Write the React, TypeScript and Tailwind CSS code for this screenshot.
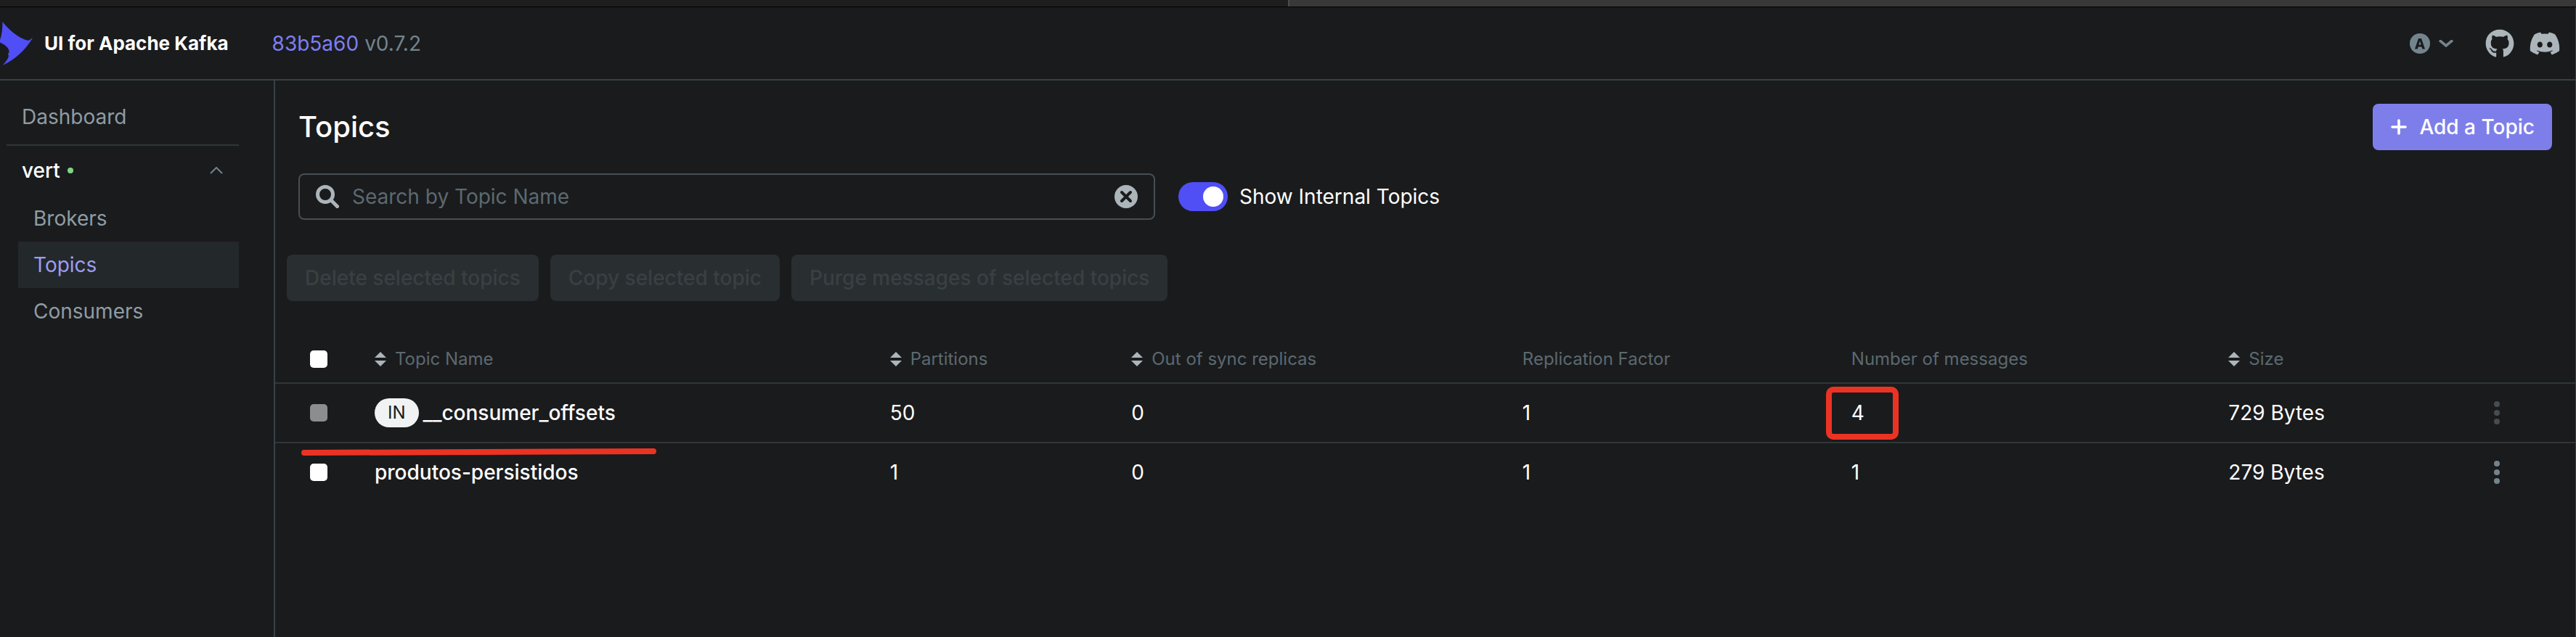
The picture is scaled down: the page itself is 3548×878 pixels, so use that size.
import React from "react";
import { FaGithub, FaDiscord } from "react-icons/fa";

type Topic = {
  name: string;
  internal: boolean;
  partitions: number;
  outOfSync: number;
  replication: number;
  messages: number;
  size: string;
};

const topics: Topic[] = [
  { name: "__consumer_offsets", internal: true, partitions: 50, outOfSync: 0, replication: 1, messages: 4, size: "729 Bytes" },
  { name: "produtos-persistidos", internal: false, partitions: 1, outOfSync: 0, replication: 1, messages: 1, size: "279 Bytes" },
];

const columns = [
  { label: "Topic Name", sortable: true },
  { label: "Partitions", sortable: true },
  { label: "Out of sync replicas", sortable: true },
  { label: "Replication Factor", sortable: false },
  { label: "Number of messages", sortable: false },
  { label: "Size", sortable: true },
];

function Logo() {
  return (
    <svg className="h-[60px] w-[45px] shrink-0" viewBox="0 0 45 60" aria-hidden="true">
      <path
        fill="#4f4ff5"
        d="M3.5 0C13 12 25 22 38.5 26C41 25 43 23.500 45 22C36 38 21 52 3.500 60C8 55 11.500 51 12 46.500C10.500 44 11.500 43 12.500 42.500C13 38 10 33 0 28.500V25C2.500 18 3.500 9 3.500 0Z"
      />
    </svg>
  );
}

function SortIcon() {
  return (
    <svg className="h-5 w-4 shrink-0" viewBox="0 0 16 20" fill="#abb5ba" aria-hidden="true">
      <path d="M8 0L16 8H0Z" />
      <path d="M8 20L0 12H16Z" />
    </svg>
  );
}

function Header() {
  return (
    <header className="flex h-[101px] items-center justify-between border-b-2 border-[#394246] pr-5">
      <div className="flex items-center">
        <a href="#" className="flex items-center gap-4 text-[26px] font-bold text-white">
          <Logo />
          UI for Apache Kafka
        </a>
        <div className="ml-[60px] flex gap-2 text-[#73848c]">
          <a href="#" className="text-[#7e7ef1]">83b5a60</a>
          <span>v0.7.2</span>
        </div>
      </div>
      <div className="flex items-center gap-5">
        <button type="button" aria-label="Theme" className="mr-6 flex items-center gap-3">
          <svg className="size-7" viewBox="0 0 28 28" aria-hidden="true">
            <circle cx="14" cy="14" r="14" fill="#73848c" />
            <path fill="#1a1b1d" fillRule="evenodd" d="M7 21.500L12 7H16L21 21.500H17.300L16.400 18.500H11.600L10.700 21.500ZM12.400 15.700H15.600L14 10.500Z" />
          </svg>
          <svg className="h-[10px] w-5" viewBox="0 0 20 10" fill="none" stroke="#73848c" strokeWidth="3.6" aria-hidden="true">
            <path d="M1 0.500L10 8L19 0.500" />
          </svg>
        </button>
        <a href="#" aria-label="GitHub">
          <FaGithub className="size-10 text-[#abb5ba]" />
        </a>
        <a href="#" aria-label="Discord">
          <FaDiscord className="size-11 text-[#abb5ba]" />
        </a>
      </div>
    </header>
  );
}

function Sidebar() {
  return (
    <aside className="w-[379px] shrink-0 border-r-2 border-[#394246] pt-[18px] pr-12 pl-[9px] text-[#8f9ca3]">
      <nav>
        <a href="#" className="flex h-16 items-center pl-[21px]">Dashboard</a>
        <hr className="mt-[6px] border-t-2 border-[#2f3639]" />
        <button type="button" aria-expanded="true" className="mt-[2px] flex h-16 w-full items-center gap-[10px] pr-[22px] pl-[21px] font-medium text-white">
          vert
          <span className="size-2 rounded-full bg-[#7fd685]" />
          <svg className="ml-auto h-[10px] w-[18px]" viewBox="0 0 18 10" fill="none" stroke="#73848c" strokeWidth="2" aria-hidden="true">
            <path d="M1 9L9 1L17 9" />
          </svg>
        </button>
        <ul className="mt-[2px] pl-4">
          <li><a href="#" className="flex h-16 items-center pl-[21px]">Brokers</a></li>
          <li><a href="#" aria-current="page" className="flex h-16 items-center bg-[#23282a] pl-[21px] text-[#9d9df0]">Topics</a></li>
          <li><a href="#" className="flex h-16 items-center pl-[21px]">Consumers</a></li>
        </ul>
      </nav>
    </aside>
  );
}

function SearchBox() {
  return (
    <div className="flex h-16 w-[1180px] items-center rounded-lg border-2 border-[#454f54] px-[22px]">
      <svg className="size-8 shrink-0" viewBox="0 0 32 32" fill="none" stroke="#abb5ba" aria-hidden="true">
        <circle cx="13" cy="13" r="10.500" strokeWidth="5" />
        <path strokeWidth="5" strokeLinecap="round" d="M21 21L29.500 29.500" />
      </svg>
      <input
        type="text"
        aria-label="Search by Topic Name"
        placeholder="Search by Topic Name"
        className="ml-[18px] min-w-0 flex-1 bg-transparent text-white outline-none placeholder:text-[#5c6970]"
      />
      <button type="button" aria-label="Clear search">
        <svg className="size-8" viewBox="0 0 32 32" aria-hidden="true">
          <circle cx="16" cy="16" r="16" fill="#abb5ba" />
          <path stroke="#1a1b1d" strokeWidth="4" strokeLinecap="round" d="M10 10L22 22M22 10L10 22" />
        </svg>
      </button>
    </div>
  );
}

function BatchButton({ children }: { children: React.ReactNode }) {
  return (
    <button type="button" disabled className="h-16 rounded-lg bg-[#292e30] px-[25px] font-medium text-[#394043]">
      {children}
    </button>
  );
}

function TopicsTable() {
  return (
    <table className="mt-[47px] w-full table-fixed text-left">
      <colgroup>
        <col className="w-[89px]" />
        <col className="w-[22.4%]" />
        <col className="w-[10.5%]" />
        <col className="w-[17%]" />
        <col className="w-[14.3%]" />
        <col className="w-[16.4%]" />
        <col />
        <col className="w-[156px]" />
      </colgroup>
      <thead>
        <tr className="h-[66px] border-b-2 border-[#2f3639] text-2xl text-[#5c6970]">
          <th className="pl-12">
            <input type="checkbox" aria-label="Select all topics" className="block size-6 appearance-none rounded-[5px] bg-white" />
          </th>
          {columns.map((column) => (
            <th key={column.label} className="pl-12 font-normal">
              <span className="flex items-center gap-3">
                {column.sortable && <SortIcon />}
                {column.label}
              </span>
            </th>
          ))}
          <th aria-label="Actions" />
        </tr>
      </thead>
      <tbody className="text-white">
        {topics.map((topic) => (
          <tr key={topic.name} className="h-[82px] border-b-2 border-[#2f3639] last:h-20 last:border-b-0">
            <td className="relative pl-12">
              <input
                type="checkbox"
                aria-label={topic.name}
                disabled={topic.internal}
                className="block size-6 appearance-none rounded-[5px] bg-white disabled:bg-[#8c8d8e]"
              />
              {topic.internal && (
                <svg className="absolute top-[89px] left-9 z-10 h-[10px] w-[489px]" viewBox="0 0 489 10" aria-hidden="true">
                  <path stroke="#eb3323" strokeWidth="8" strokeLinecap="round" d="M4 6L485 4" />
                </svg>
              )}
            </td>
            <td className="pl-12">
              <a href="#" className="flex items-center gap-[6px] font-medium">
                {topic.internal && (
                  <span className="flex h-10 items-center rounded-[20px] bg-[#f1f2f3] px-[18px] text-2xl font-normal text-[#171a1c]">IN</span>
                )}
                {topic.name}
              </a>
            </td>
            <td className="pl-12">{topic.partitions}</td>
            <td className="pl-12">{topic.outOfSync}</td>
            <td className="pl-12">{topic.replication}</td>
            <td className="relative pl-12">
              {topic.messages}
              {topic.internal && (
                <span className="absolute top-1 left-[13px] h-[73px] w-[100px] rounded-[10px] border-8 border-[#eb3323]" />
              )}
            </td>
            <td className="pl-12">{topic.size}</td>
            <td>
              <button type="button" aria-label="Topic actions" disabled={topic.internal} className="ml-10 flex flex-col items-center px-1 text-[#73848c] disabled:text-[#454d51]">
                <svg className="h-8 w-2" viewBox="0 0 8 32" fill="currentColor" aria-hidden="true">
                  <circle cx="4" cy="4" r="4" />
                  <circle cx="4" cy="16" r="4" />
                  <circle cx="4" cy="28" r="4" />
                </svg>
              </button>
            </td>
          </tr>
        ))}
      </tbody>
    </table>
  );
}

export default function App() {
  return (
    <div className="flex min-h-screen flex-col bg-[#1a1b1d] font-['Inter',sans-serif] text-[28px] leading-10">
      <div className="flex h-[10px] border-b border-black bg-[#1e1e1e]">
        <div className="ml-auto w-1/2 border-l-2 border-[#4c4c4c] bg-[#383838]" />
      </div>
      <div className="flex flex-1 flex-col border-r border-[#394246]">
        <Header />
        <div className="flex flex-1">
          <Sidebar />
          <main className="min-w-0 flex-1">
            <div className="flex items-center justify-between pt-8 pr-8 pl-8">
              <h1 className="text-[40px] font-medium text-white">Topics</h1>
              <button type="button" className="flex h-16 items-center gap-4 rounded-lg bg-[#7e7eea] px-6 font-medium text-white">
                <svg className="size-6" viewBox="0 0 24 24" fill="none" stroke="currentColor" strokeWidth="3.6" strokeLinecap="round" aria-hidden="true">
                  <path d="M12 3V21M3 12H21" />
                </svg>
                Add a Topic
              </button>
            </div>
            <div className="mt-8 flex items-center gap-8 pl-8">
              <SearchBox />
              <label className="flex items-center gap-4 text-white">
                <input
                  type="checkbox"
                  defaultChecked
                  className="flex h-10 w-[68px] appearance-none items-center rounded-[20px] bg-[#4f4ff5] px-[6px] before:size-7 before:rounded-full before:bg-white checked:justify-end"
                />
                Show Internal Topics
              </label>
            </div>
            <div className="mt-12 flex gap-4 pl-4">
              <BatchButton>Delete selected topics</BatchButton>
              <BatchButton>Copy selected topic</BatchButton>
              <BatchButton>Purge messages of selected topics</BatchButton>
            </div>
            <TopicsTable />
          </main>
        </div>
      </div>
    </div>
  );
}
